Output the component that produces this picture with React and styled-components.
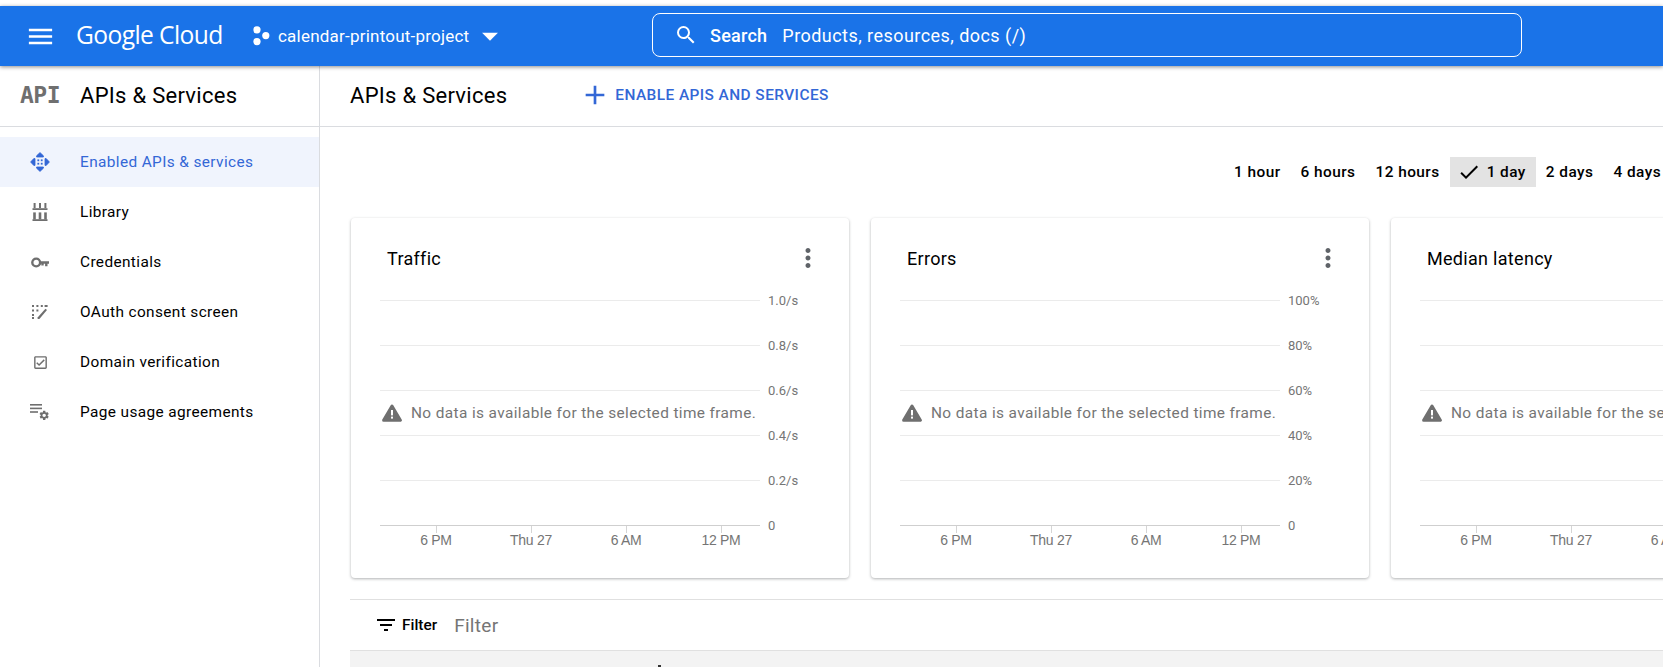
import React from 'react';
import styled, { createGlobalStyle } from 'styled-components';
import {
  MdMenu, MdSearch, MdArrowDropDown, MdAdd, MdOutlineCheckBox,
  MdMoreVert, MdCheck, MdFilterList,
} from 'react-icons/md';

const GlobalStyle = createGlobalStyle`
  html, body {
    margin: 0;
    height: 100%;
    background: #fff;
    overflow: hidden;
    font-family: Roboto, "Liberation Sans", sans-serif;
    color: #000;
  }
`;

const Page = styled.div`
  height: 667px;
  width: 1663px;
  padding-top: 6px;
  box-sizing: border-box;
  display: flex;
  flex-direction: column;
  overflow: hidden;
`;

const TopBar = styled.header`
  flex: 0 0 60px;
  background: #1a73e8;
  color: #fff;
  display: flex;
  align-items: center;
  box-shadow: 0 1px 4px rgba(0, 0, 0, .45);
  position: relative;
  z-index: 2;
`;

const MenuButton = styled.div`
  width: 32px;
  margin-left: 24px;
  display: flex;
  font-size: 31px;
  justify-content: center;
`;

const Logo = styled.div`
  margin-left: 20px;
  width: 176px;
  padding-bottom: 3px;
  font-family: "Open Sans", sans-serif;
  font-size: 24.6px;
  letter-spacing: -.6px;
  font-weight: 400;
  white-space: nowrap;
`;

const Project = styled.div`
  display: flex;
  align-items: center;
  width: 400px;
  font-size: 17px;
  letter-spacing: .22px;
  white-space: nowrap;
  svg { flex: none; }
`;

const ProjectName = styled.span`
  margin: 0 2px 0 6px;
`;

const SearchBox = styled.div`
  width: 870px;
  height: 44px;
  margin-bottom: 2px;
  box-sizing: border-box;
  border: 1px solid #fff;
  border-radius: 8px;
  display: flex;
  align-items: center;
  padding-left: 21px;
  font-size: 18px;
  letter-spacing: .45px;
  white-space: nowrap;
`;

const SearchLabel = styled.span`
  font-weight: 500;
  letter-spacing: .25px;
  margin: 0 15px 0 12px;
`;

const Body = styled.div`
  flex: 1;
  display: flex;
  min-height: 0;
`;

const Sidebar = styled.aside`
  flex: 0 0 320px;
  box-sizing: border-box;
  border-right: 1px solid #dadce0;
`;

const SideHeader = styled.div`
  height: 61px;
  box-sizing: border-box;
  border-bottom: 1px solid #dadce0;
  display: flex;
  align-items: center;
  padding: 0 0 2px 20px;
`;

const ApiMark = styled.span`
  width: 60px;
  font-family: "DejaVu Sans Mono", monospace;
  font-weight: 700;
  font-size: 23px;
  letter-spacing: -.5px;
  color: #6f6f6f;
`;

const Heading = styled.h1`
  margin: 0;
  font-size: 22px;
  font-weight: 400;
  letter-spacing: .28px;
  white-space: nowrap;
`;

const Nav = styled.nav`
  padding-top: 10px;
  display: flex;
  flex-direction: column;
`;

const NavItem = styled.div`
  height: 50px;
  display: flex;
  align-items: center;
  padding-left: 28px;
  font-size: 15.4px;
  letter-spacing: .38px;
  background: ${p => (p.$active ? '#f0f4fd' : 'transparent')};
  color: ${p => (p.$active ? '#3367d6' : '#000')};
`;

const NavIcon = styled.span`
  width: 24px;
  height: 24px;
  margin-right: 28px;
  display: flex;
  align-items: center;
  justify-content: center;
  color: ${p => (p.$active ? '#3367d6' : '#6f6f6f')};
`;

const Main = styled.main`
  flex: 1;
  min-width: 0;
  overflow: hidden;
`;

const MainHeader = styled.div`
  height: 61px;
  box-sizing: border-box;
  border-bottom: 1px solid #dadce0;
  display: flex;
  align-items: center;
  padding: 0 0 2px 30px;
`;

const EnableButton = styled.div`
  margin-left: 72px;
  display: flex;
  align-items: center;
  gap: 4px;
  font-size: 15.4px;
  font-weight: 500;
  letter-spacing: .44px;
  color: #3367d6;
  white-space: nowrap;
`;

const Content = styled.div`
  padding: 30px 0 0 30px;
`;

const RangeRow = styled.div`
  display: flex;
  height: 30px;
  padding-left: 874px;
  margin-bottom: 31px;
`;

const RangeButton = styled.div`
  flex: none;
  height: 30px;
  box-sizing: border-box;
  display: flex;
  align-items: center;
  gap: 6px;
  padding: 0 10px 0 ${p => (p.$active ? '7px' : '10px')};
  font-size: 15.4px;
  font-weight: 500;
  letter-spacing: .45px;
  white-space: nowrap;
  background: ${p => (p.$active ? '#e3e3e3' : 'transparent')};
`;

const Cards = styled.div`
  display: flex;
  gap: 22px;
  width: 1600px;
  padding-left: 1px;
`;

const Card = styled.section`
  flex: 0 0 498px;
  min-width: 0;
  height: 360px;
  box-sizing: border-box;
  border-radius: 4px;
  background: #fff;
  box-shadow: 0 1px 3px rgba(60, 64, 67, .4);
  padding: 25px 26px 0 28px;
`;

const CardTop = styled.div`
  display: flex;
  justify-content: space-between;
  align-items: center;
  height: 30px;
  padding-left: 8px;
  margin-bottom: 19px;
`;

const CardTitle = styled.h2`
  margin: 0;
  font-size: 18px;
  font-weight: 400;
  letter-spacing: .3px;
  white-space: nowrap;
`;

const MoreIcon = styled.span`
  display: flex;
  color: #5f6368;
  font-size: 30px;
`;

const ChartWrap = styled.div`
  position: relative;
  height: 263px;
`;

const NoData = styled.div`
  position: absolute;
  left: 3px;
  top: 112px;
  display: flex;
  align-items: center;
  gap: 9px;
  background: #fff;
  padding-right: 2px;
  font-size: 15.4px;
  letter-spacing: .38px;
  color: #757575;
  white-space: nowrap;
`;

const FilterRow = styled.div`
  margin: 21px 0 0 0;
  height: 51px;
  box-sizing: border-box;
  border-top: 1px solid #e0e0e0;
  display: flex;
  align-items: center;
  padding-left: 24px;
`;

const FilterLabel = styled.span`
  margin-left: 4px;
  font-size: 15.4px;
  font-weight: 500;
`;

const FilterInput = styled.span`
  margin-left: 17px;
  font-size: 19px;
  letter-spacing: .3px;
  color: #757575;
`;

const TableHead = styled.div`
  height: 60px;
  border-top: 1px solid #e0e0e0;
  background: #f3f3f3;
`;

const SortTick = styled.div`
  width: 3px;
  height: 2px;
  margin: 14px 0 0 308px;
  background: #333;
`;

function ProjectDots() {
  return (
    <svg width="20" height="20" viewBox="0 0 20 20" fill="#fff">
      <circle cx="5" cy="3.8" r="3.6" />
      <circle cx="5" cy="15.6" r="3.6" />
      <circle cx="13.8" cy="9.6" r="3.6" />
    </svg>
  );
}

function EnabledIcon() {
  return (
    <svg width="20" height="20" viewBox="0 0 20 20" fill="currentColor" stroke="currentColor" strokeWidth=".8" strokeLinejoin="round">
      <path d="M10 .6l3.4 3.2v1.2H6.6V3.8z" />
      <path d="M10 19.4l-3.4-3.2V15h6.8v1.2z" />
      <path d="M.6 10l3.2-3.4H5v6.8H3.8z" />
      <path d="M19.4 10l-3.2-3.4H15v6.8h1.2z" />
      <g stroke="none">
        <rect x="7.4" y="7.4" width="1.8" height="1.8" />
        <rect x="10.8" y="7.4" width="1.8" height="1.8" />
        <rect x="7.4" y="10.8" width="1.8" height="1.8" />
        <rect x="10.8" y="10.8" width="1.8" height="1.8" />
      </g>
    </svg>
  );
}

function LibraryIcon() {
  return (
    <svg width="16" height="18" viewBox="0 0 16 18" fill="currentColor">
      <rect x="1.6" y="0" width="2" height="5" />
      <rect x="7" y="0" width="2" height="5" />
      <rect x="12.4" y="0" width="2" height="5" />
      <rect x="0.5" y="5.2" width="15" height="1.8" />
      <rect x="1.2" y="9.4" width="2.6" height="7" />
      <rect x="6.7" y="9.4" width="2.6" height="7" />
      <rect x="12.2" y="9.4" width="2.6" height="7" />
      <rect x="0.5" y="16.2" width="15" height="1.8" />
    </svg>
  );
}

function KeyIcon() {
  return (
    <svg width="18" height="11" viewBox="0 0 18 11" fill="currentColor">
      <circle cx="5.2" cy="5.5" r="3.9" fill="none" stroke="currentColor" strokeWidth="2.4" />
      <path d="M8.5 4.2H18v2.6h-1.5v2.4h-2.4V6.8h-1.4v1.6h-2.4V6.8H8.5z" />
    </svg>
  );
}

function OauthIcon() {
  return (
    <svg width="16" height="14" viewBox="0 0 16 14" fill="currentColor">
      <rect x="0" y="0" width="2" height="2" />
      <rect x="4.4" y="0" width="2" height="2" />
      <rect x="8.8" y="0" width="2" height="2" />
      <rect x="0" y="4.5" width="2" height="2" />
      <rect x="4.4" y="4.5" width="2" height="2" />
      <rect x="0" y="9" width="2" height="2" />
      <rect x="0" y="12" width="2" height="2" />
      <path d="M5.6 12.4l7.8-8.6 1.6 1.2L7.4 14H5.6z" />
      <rect x="12.6" y="0" width="3" height="2" />
    </svg>
  );
}

function UsageIcon() {
  return (
    <svg width="20" height="17" viewBox="0 0 20 17" fill="currentColor">
      <rect x="0" y="0" width="12" height="1.6" />
      <rect x="0" y="3.6" width="12" height="1.6" />
      <rect x="0" y="7.2" width="8" height="1.6" />
      <path
        transform="translate(8.4 5.6) scale(.48)"
        d="M19.14 12.94c.04-.3.06-.61.06-.94 0-.32-.02-.64-.07-.94l2.03-1.58c.18-.14.23-.41.12-.61l-1.92-3.32c-.12-.22-.37-.29-.59-.22l-2.39.96c-.5-.38-1.03-.7-1.62-.94l-.36-2.54c-.04-.24-.24-.41-.48-.41h-3.84c-.24 0-.43.17-.47.41l-.36 2.54c-.59.24-1.13.57-1.62.94l-2.39-.96c-.22-.08-.47 0-.59.22L2.74 8.87c-.12.21-.08.47.12.61l2.03 1.58c-.05.3-.07.62-.07.94s.02.64.07.94l-2.03 1.58c-.18.14-.23.41-.12.61l1.92 3.32c.12.22.37.29.59.22l2.39-.96c.5.38 1.03.7 1.62.94l.36 2.54c.05.24.24.41.48.41h3.84c.24 0 .44-.17.47-.41l.36-2.54c.59-.24 1.13-.56 1.62-.94l2.39.96c.22.08.47 0 .59-.22l1.92-3.32c.12-.22.07-.47-.12-.61l-2.01-1.58zM12 15.6c-1.98 0-3.6-1.62-3.6-3.6s1.62-3.6 3.6-3.6 3.6 1.62 3.6 3.6-1.62 3.6-3.6 3.6z"
      />
    </svg>
  );
}

function WarningIcon() {
  return (
    <svg width="20" height="18" viewBox="0 0 20 18">
      <path d="M10 2L18.4 16.2H1.6z" fill="#6f6f6f" stroke="#6f6f6f" strokeWidth="3" strokeLinejoin="round" />
      <rect x="9" y="6" width="2" height="5.4" fill="#fff" />
      <rect x="9" y="12.6" width="2" height="2" fill="#fff" />
    </svg>
  );
}

const GRID_Y = [8.5, 53.5, 98.5, 143.5, 188.5];

function Chart({ yLabels, xLabels, noData }) {
  return (
    <ChartWrap>
      <svg width="444" height="263" viewBox="0 0 444 263">
        {GRID_Y.map(y => (
          <line key={y} x1="1" x2="381" y1={y} y2={y} stroke="#ebebeb" />
        ))}
        <line x1="1" x2="381" y1="233.5" y2="233.5" stroke="#cfcfcf" />
        {yLabels.map((label, i) => (
          <text key={label} x="389" y={13 + i * 45} fontSize="13" fill="#757575" fontFamily="Roboto, sans-serif">{label}</text>
        ))}
        {[57, 152, 247, 342].map((x, i) => (
          <g key={x}>
            <line x1={x + 0.5} x2={x + 0.5} y1="234" y2="241" stroke="#d5d5d5" />
            <text x={x} y="253" fontSize="14" letterSpacing="-.3" fill="#757575" textAnchor="middle" fontFamily="'Liberation Sans', sans-serif">{xLabels[i]}</text>
          </g>
        ))}
      </svg>
      <NoData>
        <WarningIcon />
        {noData}
      </NoData>
    </ChartWrap>
  );
}

const X_LABELS = ['6 PM', 'Thu 27', '6 AM', '12 PM'];
const NO_DATA = 'No data is available for the selected time frame.';

const CHARTS = [
  { title: 'Traffic', y: ['1.0/s', '0.8/s', '0.6/s', '0.4/s', '0.2/s', '0'] },
  { title: 'Errors', y: ['100%', '80%', '60%', '40%', '20%', '0'] },
  { title: 'Median latency', y: [] },
];

const NAV = [
  { label: 'Enabled APIs & services', icon: <EnabledIcon />, active: true },
  { label: 'Library', icon: <LibraryIcon /> },
  { label: 'Credentials', icon: <KeyIcon /> },
  { label: 'OAuth consent screen', icon: <OauthIcon /> },
  { label: 'Domain verification', icon: <MdOutlineCheckBox size={17} /> },
  { label: 'Page usage agreements', icon: <UsageIcon /> },
];

const RANGES = ['1 hour', '6 hours', '12 hours', '1 day', '2 days', '4 days'];

export default function App() {
  return (
    <Page>
      <GlobalStyle />
      <TopBar>
        <MenuButton><MdMenu /></MenuButton>
        <Logo>Google Cloud</Logo>
        <Project>
          <ProjectDots />
          <ProjectName>calendar-printout-project</ProjectName>
          <MdArrowDropDown size={38} />
        </Project>
        <SearchBox>
          <MdSearch size={24} />
          <SearchLabel>Search</SearchLabel>
          Products, resources, docs (/)
        </SearchBox>
      </TopBar>
      <Body>
        <Sidebar>
          <SideHeader>
            <ApiMark>API</ApiMark>
            <Heading>APIs &amp; Services</Heading>
          </SideHeader>
          <Nav>
            {NAV.map(item => (
              <NavItem key={item.label} $active={item.active}>
                <NavIcon $active={item.active}>{item.icon}</NavIcon>
                {item.label}
              </NavItem>
            ))}
          </Nav>
        </Sidebar>
        <Main>
          <MainHeader>
            <Heading>APIs &amp; Services</Heading>
            <EnableButton>
              <MdAdd size={32} />
              ENABLE APIS AND SERVICES
            </EnableButton>
          </MainHeader>
          <Content>
            <RangeRow>
              {RANGES.map(range => (
                <RangeButton key={range} $active={range === '1 day'}>
                  {range === '1 day' && <MdCheck size={24} />}
                  {range}
                </RangeButton>
              ))}
            </RangeRow>
            <Cards>
              {CHARTS.map(chart => (
                <Card key={chart.title}>
                  <CardTop>
                    <CardTitle>{chart.title}</CardTitle>
                    <MoreIcon><MdMoreVert /></MoreIcon>
                  </CardTop>
                  <Chart yLabels={chart.y} xLabels={X_LABELS} noData={NO_DATA} />
                </Card>
              ))}
            </Cards>
            <FilterRow>
              <MdFilterList size={24} />
              <FilterLabel>Filter</FilterLabel>
              <FilterInput>Filter</FilterInput>
            </FilterRow>
            <TableHead><SortTick /></TableHead>
          </Content>
        </Main>
      </Body>
    </Page>
  );
}
